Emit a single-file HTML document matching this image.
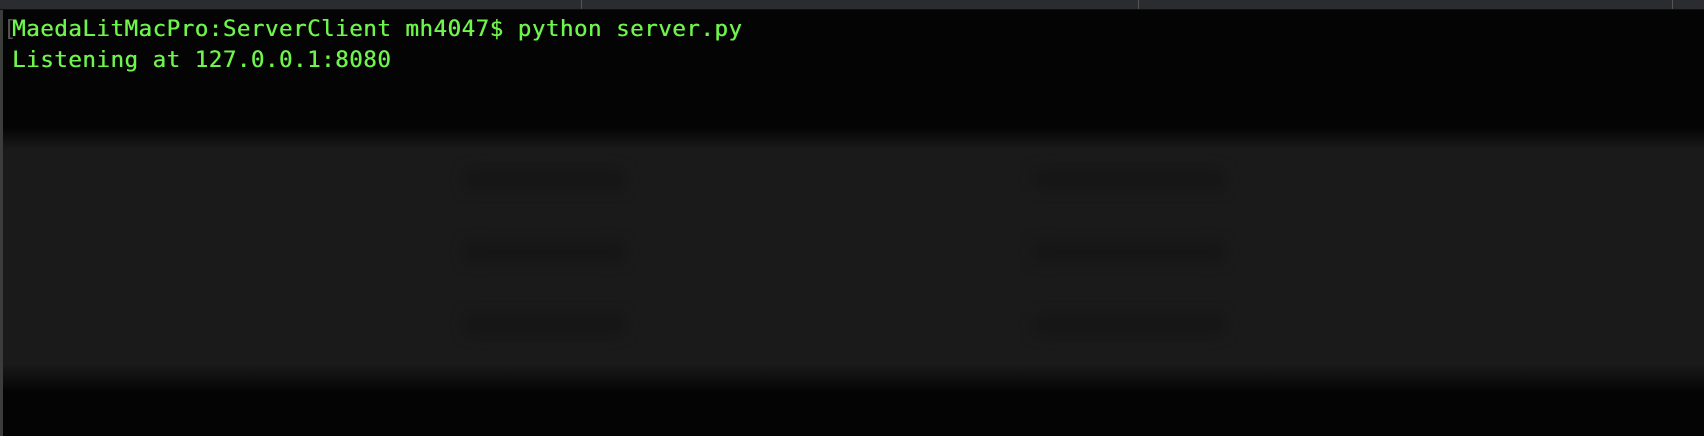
<!DOCTYPE html>
<html><head><style>
html,body{margin:0;padding:0;width:1704px;height:436px;overflow:hidden;background:#040404}
#bar{position:absolute;left:0;top:0;width:1704px;height:9px;background:#2b2c2f;border-bottom:1px solid #111}
.sep{position:absolute;top:0;width:1px;height:9px;background:#555}
#mid{position:absolute;left:0;top:128px;width:1704px;height:262px;background:linear-gradient(#040404 0px,#1a1a1a 22px,#1a1a1a 236px,#060606 262px)}
.blob{position:absolute;height:18px;background:#151515;filter:blur(7px);border-radius:6px}
#lline{position:absolute;left:0;top:10px;width:3px;height:426px;background:#3a3d3a}
#term{position:absolute;left:12px;top:14px;font-family:"DejaVu Sans Mono","Liberation Mono",monospace;font-size:22.5px;line-height:31px;color:#6ef54c;letter-spacing:0.5px;white-space:pre;text-shadow:0.4px 0 0 #6ef54c}
#br{position:absolute;left:3px;top:14px;font-family:"DejaVu Sans Mono",monospace;font-size:22.5px;line-height:31px;color:#555}
</style></head><body>
<div id="bar"><div class="sep" style="left:581px"></div><div class="sep" style="left:1138px"></div><div class="sep" style="left:1672px"></div></div>
<div id="mid">
<div class="blob" style="left:465px;top:42px;width:160px"></div>
<div class="blob" style="left:1035px;top:42px;width:190px"></div>
<div class="blob" style="left:465px;top:115px;width:160px"></div>
<div class="blob" style="left:1035px;top:115px;width:190px"></div>
<div class="blob" style="left:465px;top:188px;width:160px"></div>
<div class="blob" style="left:1035px;top:188px;width:190px"></div>
</div>
<div id="lline"></div>
<div id="br">[</div>
<div id="term">MaedaLitMacPro:ServerClient mh4047$ python server.py
Listening at 127.0.0.1:8080</div>
</body></html>
